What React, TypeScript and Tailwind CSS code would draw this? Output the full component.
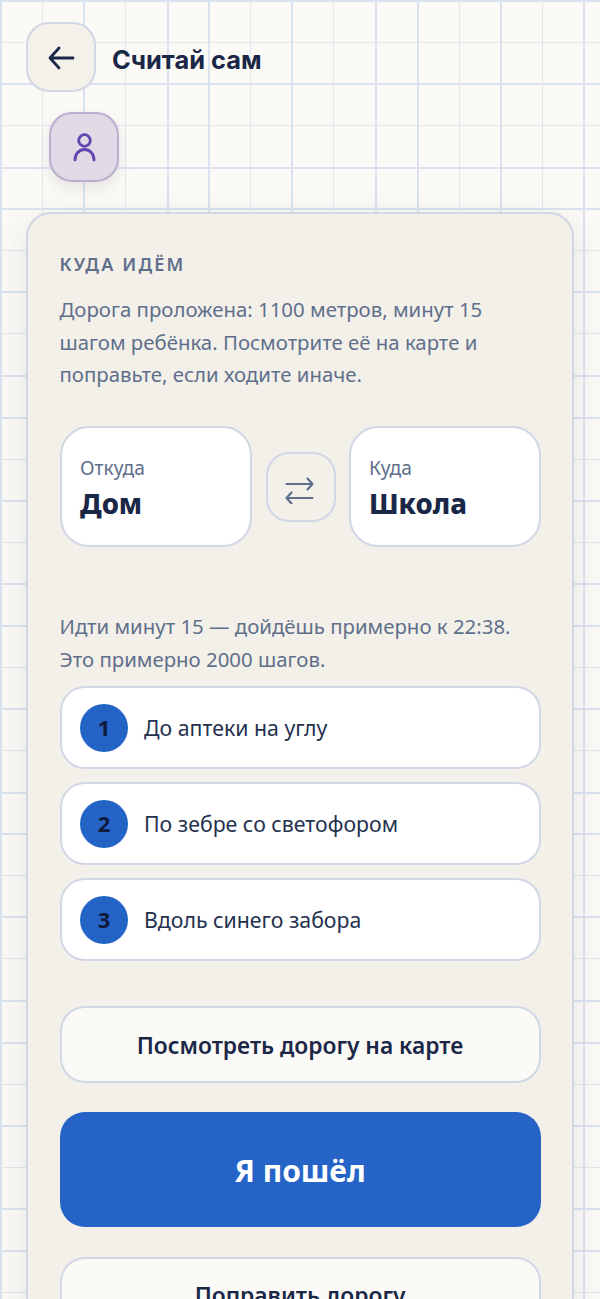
const steps = ["До аптеки на углу", "По зебре со светофором", "Вдоль синего забора"];

function Place({ label, name }: { label: string; name: string }) {
  return (
    <div className="flex h-[121px] flex-1 flex-col justify-center rounded-[29px] border-2 border-[#d0d7e5] bg-white pt-[4px] pl-[18.5px]">
      <span className="text-[19.2px] leading-[28px] text-[#5f6f8a]">{label}</span>
      <span className="mt-[2px] text-[27.5px] leading-[40px] font-extrabold text-[#1a2747]">{name}</span>
    </div>
  );
}

function Step({ n, text }: { n: number; text: string }) {
  return (
    <div className="flex h-[83px] items-center gap-4 rounded-[25px] border-2 border-[#d0d7e5] bg-white pl-[18.5px]">
      <span className="flex size-12 items-center justify-center rounded-full bg-[#2563c7] text-[22px] font-bold text-[#0f1b3d]">
        {n}
      </span>
      <span className="pt-[1px] text-[21.3px] text-[#24314f]">{text}</span>
    </div>
  );
}

export default function App() {
  return (
    // squared-paper backdrop: the line weight alternates over a five-cell repeat
    <div className="h-[1299px] w-full overflow-hidden bg-[#fcfaf6] bg-[repeating-linear-gradient(to_right,#dbe2ef_0_2px,transparent_2px_42px,#e2e6ed_42px_43px,transparent_43px_83px,#dbe2ef_83px_85px,transparent_85px_125px,#e2e6ed_125px_126px,transparent_126px_166.67px,#dbe2ef_166.67px_168.67px,transparent_168.67px_208.33px),repeating-linear-gradient(to_bottom,#dbe2ef_0_2px,transparent_2px_42px,#e2e6ed_42px_43px,transparent_43px_83px,#dbe2ef_83px_85px,transparent_85px_125px,#e2e6ed_125px_126px,transparent_126px_166.67px,#dbe2ef_166.67px_168.67px,transparent_168.67px_208.33px)] pt-[22px] font-['Noto_Sans',sans-serif]">
      {/* header */}
      <div className="flex items-center gap-4 pl-[26px]">
        <button className="flex size-[70px] items-center justify-center rounded-[23px] border-2 border-[#d0d7e5] bg-[#f4f1ea] text-[#1a2747]">
          <svg width="34" height="34" viewBox="0 0 34 34" fill="none" stroke="currentColor" strokeWidth="2.8" strokeLinecap="round" strokeLinejoin="round">
            <path d="M29 18H6M15 8 6 18l9 10" />
          </svg>
        </button>
        <h1 className="pt-[7px] font-['Inter',sans-serif] text-[25.4px] font-bold text-[#1a2747]">Считай сам</h1>
      </div>
      <button className="mt-5 ml-[49px] flex size-[70px] items-center justify-center rounded-[23px] border-2 border-[#b9b0cf] bg-[#e1d9e5] text-[#6246b0] shadow-[0_6px_14px_rgba(26,39,71,0.1)]">
        <svg width="34" height="34" viewBox="0 0 34 34" fill="none" stroke="currentColor" strokeWidth="2.8" strokeLinecap="round">
          <circle cx="17.5" cy="10.5" r="5.8" />
          <path d="M8 30C8 24 12 19.5 17.5 19.5S27 24 27 30" />
        </svg>
      </button>

      {/* route card */}
      <section className="mx-[26px] mt-[30px] rounded-[25px] border-2 border-[#d0d7e5] bg-[#f3f0ea] px-[31.5px] pt-[38px] shadow-[0_8px_36px_rgba(26,39,71,0.1)]">
        <h2 className="text-[18px] leading-[24px] font-semibold tracking-[0.12em] text-[#5f6f8a] uppercase">Куда идём</h2>
        <p className="mt-[17px] text-[20.4px] leading-[32.6px] text-[#5f6f8a]">
          Дорога проложена: 1100 метров, минут 15 шагом ребёнка. Посмотрите её на карте и поправьте, если ходите иначе.
        </p>

        <div className="mt-[35.5px] flex items-center gap-[13.5px]">
          <Place label="Откуда" name="Дом" />
          <button className="mr-[-1px] ml-[1px] flex size-[70px] shrink-0 items-center justify-center rounded-[23px] border-2 border-[#d0d7e5] bg-[#f3f0ea] text-[#5f6f8a]">
            <svg width="34" height="34" viewBox="0 0 34 34" fill="none" stroke="currentColor" strokeWidth="2.2" strokeLinecap="round" strokeLinejoin="round">
              <path d="M2.5 14h26M23.5 8.5l5 5.5-5 5.5" />
              <path d="M28.5 28h-26M7.5 22.5l-5 5.5 5 5.5" />
            </svg>
          </button>
          <Place label="Куда" name="Школа" />
        </div>

        <p className="mt-[63px] text-[20.4px] leading-[33px] text-[#5f6f8a]">
          Идти минут 15 — дойдёшь примерно к 22:38.
          <br />
          Это примерно 2000 шагов.
        </p>

        <div className="mt-[10px] flex flex-col gap-[13px]">
          {steps.map((s, i) => (
            <Step key={s} n={i + 1} text={s} />
          ))}
        </div>

        <button className="mt-[45px] h-[77px] w-full rounded-[25px] border-2 border-[#d0d7e5] bg-[#fcfaf6] pt-[2px] text-[22.8px] font-semibold text-[#1a2747]">
          Посмотреть дорогу на карте
        </button>
        <button className="mt-[28.5px] h-[115px] w-full rounded-[25px] bg-[#2563c7] pt-[2px] text-[30px] font-bold text-white">
          Я пошёл
        </button>
        <button className="mt-[30px] h-[77px] w-full rounded-[25px] border-2 border-[#d0d7e5] bg-[#fcfaf6] pt-[2px] text-[22.8px] font-semibold text-[#1a2747]">
          Поправить дорогу
        </button>
      </section>
    </div>
  );
}
